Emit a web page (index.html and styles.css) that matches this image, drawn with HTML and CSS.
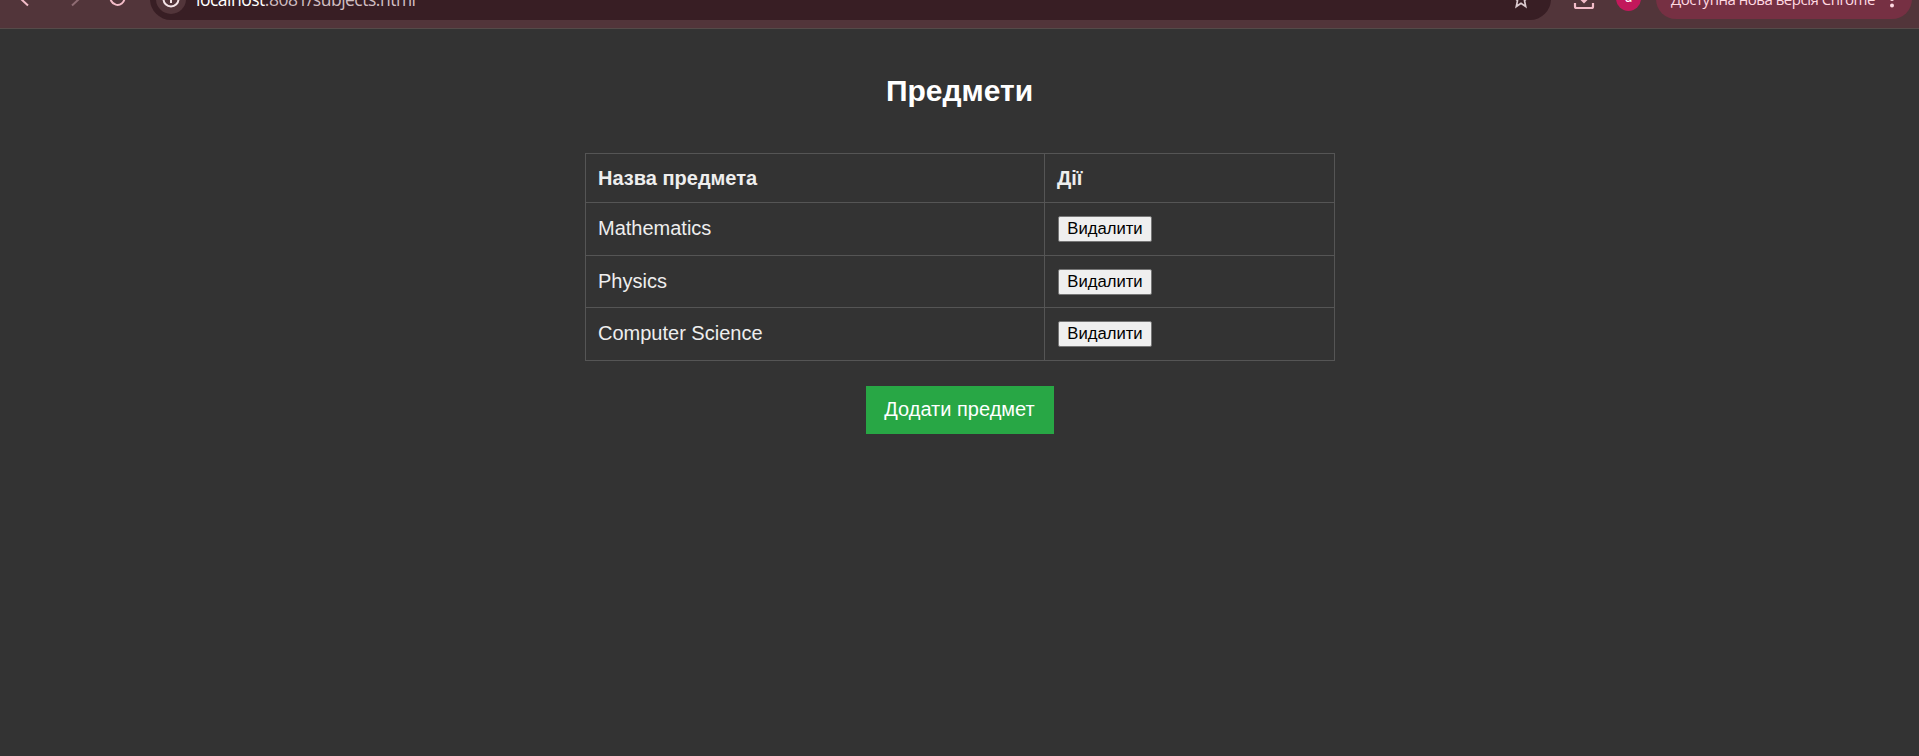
FILE: index.html
```html
<!DOCTYPE html>
<html lang="uk">
<head>
<meta charset="utf-8">
<title>Предмети</title>
<link rel="stylesheet" href="styles.css">
</head>
<body>
<header class="toolbar">
  <svg class="nav" width="150" height="42" viewBox="0 -22 150 42">
    <path class="stroke" d="M28 5.5 20.5 -1.5 28 -8.5M20.5 -1.5H35"/>
    <path class="stroke dim" d="M72 5.5 79.5 -1.5 72 -8.5M79.5 -1.5H65"/>
    <path class="stroke" d="M124.5 -2A7 7 0 1 1 122 -7.5M124.5 -10v5h-5"/>
  </svg>
  <div class="omnibox">
    <svg class="info" width="30" height="30" viewBox="0 0 30 30">
      <circle class="info-bg" cx="15" cy="15" r="15"/>
      <circle class="info-line" cx="15" cy="15" r="7.5"/>
      <path class="info-line" d="M15 14v5M15 10.5v1.5"/>
    </svg>
    <span class="url"><span class="host">localhost</span>:8081/subjects.html</span>
    <svg class="star" width="20" height="20" viewBox="0 0 20 20">
      <path d="M10 2.5l2.2 5 5.3.5-4 3.6 1.2 5.9-4.7-3.2-4.7 3.2 1.2-5.9-4-3.6 5.3-.5z"/>
    </svg>
  </div>
  <svg class="download" width="65" height="42" viewBox="1551 -22 65 42">
    <path class="tray" d="M1575 3v3.500q0 1.500 1.500 1.500h15q1.500 0 1.500-1.500V3"/>
    <path class="arrow" d="M1577.500-3h13l-6.500 6.500z"/>
  </svg>
  <div class="avatar">a</div>
  <div class="update">
    <span class="update-text">Доступна нова версія Chrome</span>
    <svg width="6" height="20" viewBox="0 0 6 20"><circle cx="3" cy="3.500" r="2"/><circle cx="3" cy="10" r="2"/><circle cx="3" cy="16.500" r="2"/></svg>
  </div>
</header>
<main class="page">
  <h2 class="title">Предмети</h2>
  <table class="subjects">
    <thead><tr class="head"><th class="name">Назва предмета</th><th>Дії</th></tr></thead>
    <tbody>
      <tr class="tall"><td>Mathematics</td><td><button class="delete">Видалити</button></td></tr>
      <tr><td>Physics</td><td><button class="delete">Видалити</button></td></tr>
      <tr class="tall"><td>Computer Science</td><td><button class="delete">Видалити</button></td></tr>
    </tbody>
  </table>
  <a class="add">Додати предмет</a>
</main>
</body>
</html>
```
FILE: styles.css
```css
* { box-sizing: border-box; }
html, body { height: 100%; }
body {
  margin: 0;
  background: #333;
  color: #eee;
  font-family: "Liberation Sans", Arial, sans-serif;
  font-size: 20px;
  overflow: hidden;
}
.toolbar {
  display: flex;
  align-items: flex-end;
  height: 29px;
  padding-bottom: 8px;
  border-bottom: 1px solid #554b49;
  background: #52353a;
  overflow: hidden;
}
.toolbar > * { flex: none; }
.stroke { fill: none; stroke: #f3bcc8; stroke-width: 2; }
.dim { stroke: #8f6c73; }
.omnibox {
  display: flex;
  align-items: center;
  width: 1401px;
  height: 42px;
  padding: 0 20px 0 6px;
  border-radius: 21px;
  background: #381e24;
}
.info-bg { fill: #52353a; }
.info-line { fill: none; stroke: #f4e4e7; stroke-width: 2; }
.url {
  margin-left: 10px;
  color: #d0bec2;
  font: 17.500px/24px "Open Sans", "Noto Sans", sans-serif;
  letter-spacing: -.5px;
  white-space: nowrap;
}
.host { color: #fff; }
.star { margin-left: auto; fill: none; stroke: #dccbd0; stroke-width: 1.700; }
.tray { fill: none; stroke: #f3bcc8; stroke-width: 2.200; }
.arrow { fill: #f3bcc8; }
.avatar {
  width: 25px;
  height: 25px;
  margin-bottom: 9px;
  border-radius: 50%;
  background: #c2185b;
  color: #fff;
  font: 14px/22px Roboto, sans-serif;
  text-align: center;
}
.update {
  display: flex;
  align-items: center;
  justify-content: space-between;
  width: 256px;
  height: 40px;
  margin: 0 0 1px 15px;
  padding: 0 17px 0 15px;
  border-radius: 20px;
  background: #763043;
  color: #ffd9e2;
}
.update-text {
  font: 15px/20px "Open Sans", "Noto Sans", sans-serif;
  letter-spacing: -.48px;
  white-space: nowrap;
}
.update svg { fill: #ffd9e2; }
.page {
  display: flex;
  flex-direction: column;
  align-items: center;
  padding-top: 45px;
}
.title {
  margin: 0 0 45px;
  color: #fff;
  font-size: 30px;
  line-height: 34px;
}
.subjects {
  width: 750px;
  margin-left: 1px;
  border-collapse: collapse;
  table-layout: fixed;
}
.subjects tr { height: 52px; }
.subjects .head { height: 49px; }
.subjects .tall { height: 53px; }
.subjects th, .subjects td {
  padding: 0 12px;
  border: 1px solid #555;
  text-align: left;
  line-height: 23px;
}
.subjects .tall td:first-child { padding-bottom: 2px; }
.subjects .name { width: 459px; }
.delete {
  display: block;
  width: 94px;
  height: 26px;
  margin-left: 1px;
  padding: 0;
  border: 1px solid #767676;
  border-radius: 2px;
  background: #efefef;
  color: #000;
  font: 16.670px/20px "Liberation Sans", Arial, sans-serif;
}
.add {
  margin-top: 25px;
  width: 188px;
  height: 48px;
  background: #28a745;
  color: #fff;
  line-height: 47px;
  text-align: center;
}
```
